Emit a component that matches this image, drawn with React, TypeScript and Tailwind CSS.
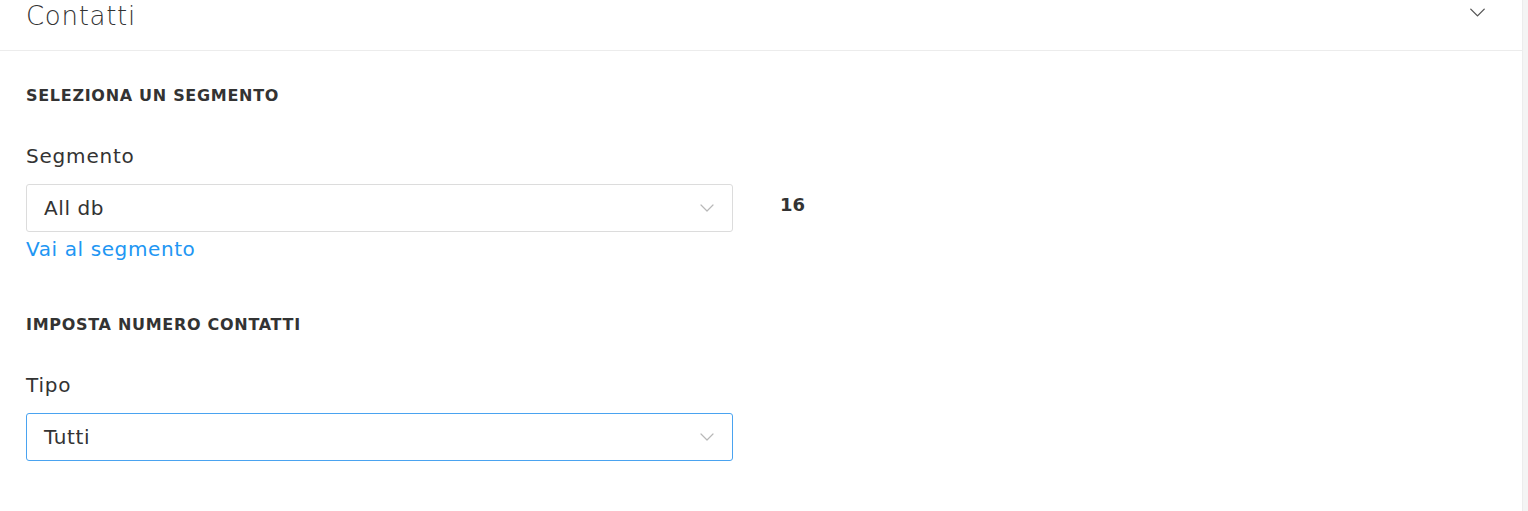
import { ChevronDown } from "lucide-react";

const font = { fontFamily: '"DejaVu Sans", "Noto Sans", sans-serif' };

const Select = (props: any) => {
  const { value, active } = props;
  return (
    <div
      className={`flex h-12 w-[707px] items-center justify-between rounded-[3px] border bg-white pl-[17px] pr-[13px] ${
        active ? "border-[#4aa3f0]" : "border-[#dcdcdc]"
      }`}
    >
      <span className="text-[20px] tracking-[0.6px] text-[#333]">{value}</span>
      <ChevronDown className="h-6 w-6 text-[#b8b8b8]" strokeWidth={1.2} />
    </div>
  );
};

export default function App() {
  return (
    <div className="flex min-h-[511px] w-full bg-[#f4f4f4]" style={font}>
      <div className="w-[1523px] border-r border-[#ececec] bg-white">
        <div className="flex h-[51px] items-start justify-between border-b border-[#ececec] pl-[26px] pr-[31px]">
          <h2 className="-mt-[2px] text-[26px] font-extralight leading-[36px] tracking-[0.7px] text-[#333]">
            Contatti
          </h2>
          <ChevronDown className="mt-[-1px] h-[27px] w-[27px] text-[#555]" strokeWidth={1.2} />
        </div>

        <div className="px-[26px]">
          <h3 className="mt-[35px] text-[16px] font-bold leading-[20px] tracking-[0.7px] text-[#333]">
            SELEZIONA UN SEGMENTO
          </h3>

          <label className="mt-[38px] block text-[20px] leading-[24px] tracking-[0.8px] text-[#333]">
            Segmento
          </label>
          <div className="mt-[16px] flex items-center gap-[47px]">
            <Select value="All db" />
            <span className="-mt-[8px] text-[18px] font-bold text-[#333]">16</span>
          </div>
          <a href="#" className="mt-[4px] block text-[20px] leading-[26px] tracking-[0.6px] text-[#2196f3]">
            Vai al segmento
          </a>

          <h3 className="mt-[53px] text-[16px] font-bold leading-[20px] tracking-[0.7px] text-[#333]">
            IMPOSTA NUMERO CONTATTI
          </h3>

          <label className="mt-[38px] block text-[20px] leading-[24px] tracking-[0.8px] text-[#333]">Tipo</label>
          <div className="mt-[16px]">
            <Select value="Tutti" active />
          </div>
        </div>
      </div>
    </div>
  );
}
